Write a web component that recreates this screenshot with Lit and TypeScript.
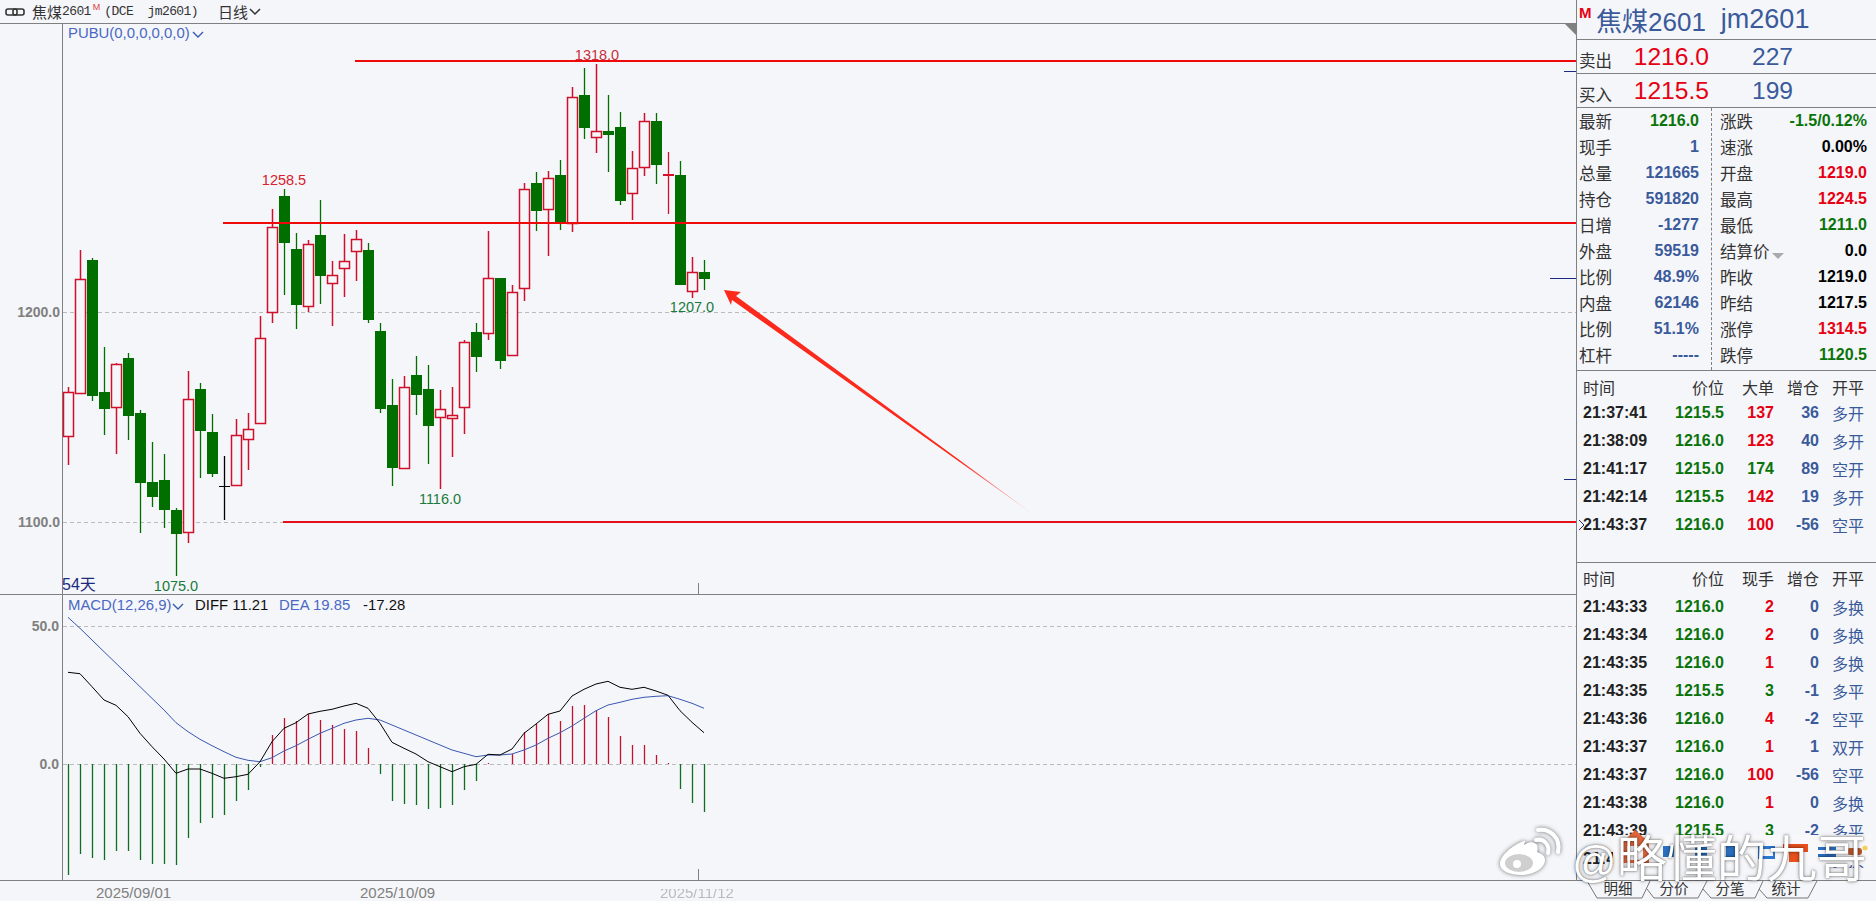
import { LitElement, css, html, svg } from 'lit';
import { customElement } from 'lit/decorators.js';

// [kind, high, bodyTop, bodyBottom, low] in page pixels. u = hollow red, d = solid green, x = black doji, r = red doji
type Candle = [string, number, number, number, number];
const CANDLES: Candle[] = [
  ['u', 387, 392, 436, 465], ['u', 250, 279, 393, 393], ['d', 258, 260, 396, 401], ['d', 347, 392, 409, 435],
  ['u', 363, 364, 407, 454], ['d', 353, 358, 416, 440], ['d', 410, 413, 483, 533], ['d', 442, 482, 497, 507],
  ['d', 454, 480, 510, 528], ['d', 508, 510, 534, 576], ['u', 371, 399, 532, 543], ['d', 383, 389, 431, 478],
  ['d', 414, 432, 474, 477], ['x', 456, 486, 486, 520], ['u', 419, 435, 485, 485], ['u', 413, 429, 439, 470],
  ['u', 316, 338, 423, 424], ['u', 209, 227, 312, 323], ['d', 189, 196, 243, 295], ['d', 233, 249, 305, 329],
  ['u', 240, 244, 306, 312], ['d', 200, 235, 276, 304], ['u', 261, 275, 283, 326], ['u', 234, 261, 268, 297],
  ['u', 230, 239, 251, 281], ['d', 243, 250, 320, 323], ['d', 323, 331, 409, 413], ['d', 379, 405, 468, 486],
  ['u', 376, 387, 468, 468], ['d', 356, 375, 395, 415], ['d', 365, 389, 426, 464], ['u', 390, 409, 417, 489],
  ['u', 387, 415, 418, 457], ['u', 340, 342, 407, 434], ['d', 323, 332, 357, 372], ['u', 231, 278, 333, 340],
  ['d', 278, 278, 361, 369], ['u', 285, 292, 355, 355], ['u', 183, 189, 288, 301], ['d', 172, 183, 211, 231],
  ['u', 171, 178, 209, 256], ['d', 160, 175, 222, 230], ['u', 87, 97, 223, 232], ['d', 68, 95, 128, 139],
  ['u', 64, 131, 137, 153], ['d', 95, 131, 135, 172], ['d', 112, 127, 201, 205], ['u', 151, 168, 193, 220],
  ['u', 113, 121, 167, 176], ['d', 113, 121, 165, 184], ['r', 152, 174, 176, 214], ['d', 161, 175, 285, 285],
  ['u', 257, 272, 291, 298], ['d', 260, 272, 279, 290],
];

const HIST = [
  875, 854, 858, 860, 851, 851, 860, 864, 864, 865, 838, 823, 818, 815, 801, 790, 767, 735, 718, 721, 714, 720, 725,
  729, 731, 748, 774, 801, 804, 805, 809, 808, 805, 790, 781, 763, 764, 754, 732, 724, 714, 721, 706, 705, 710, 717,
  736, 745, 745, 755, 763, 789, 803, 812,
];

const DIFF = [
  307, 311, 350, 390, 406, 440, 490, 530, 567, 610, 597, 597, 610, 625, 620, 613, 575, 515, 475, 458, 432, 424, 418,
  408, 400, 415, 460, 517, 535, 552, 575, 590, 605, 590, 583, 553, 555, 537, 490, 462, 433, 423, 378, 358, 342, 334,
  352, 358, 352, 363, 376, 422, 457, 488,
];

const DEA = [
  142, 175, 210, 245, 280, 315, 350, 385, 420, 458, 485, 508, 527, 545, 562, 571, 575, 563, 543, 527, 508, 490, 475,
  460, 450, 445, 450, 465, 480, 495, 510, 525, 540, 550, 560, 555, 555, 552, 540, 525, 505, 488, 468, 445, 422, 405,
  397, 388, 382, 379, 377, 388, 400, 415,
];

const cx = (i: number) => 68 + 12 * i;
const line = (data: number[]) => data.map((v, i) => `${cx(i)},${(570 + v / 3).toFixed(1)}`).join(' ');

type Tone = 'g' | 'r' | 'b' | 'k';
const STATS_LEFT: [string, string, Tone][] = [
  ['最新', '1216.0', 'g'], ['现手', '1', 'b'], ['总量', '121665', 'b'], ['持仓', '591820', 'b'], ['日增', '-1277', 'b'],
  ['外盘', '59519', 'b'], ['比例', '48.9%', 'b'], ['内盘', '62146', 'b'], ['比例', '51.1%', 'b'], ['杠杆', '-----', 'b'],
];
const STATS_RIGHT: [string, string, Tone][] = [
  ['涨跌', '-1.5/0.12%', 'g'], ['速涨', '0.00%', 'k'], ['开盘', '1219.0', 'r'], ['最高', '1224.5', 'r'], ['最低', '1211.0', 'g'],
  ['结算价', '0.0', 'k'], ['昨收', '1219.0', 'k'], ['昨结', '1217.5', 'k'], ['涨停', '1314.5', 'r'], ['跌停', '1120.5', 'g'],
];

type Tick = [string, string, string, Tone, string, string];
const BIG: Tick[] = [
  ['21:37:41', '1215.5', '137', 'r', '36', '多开'],
  ['21:38:09', '1216.0', '123', 'r', '40', '多开'],
  ['21:41:17', '1215.0', '174', 'g', '89', '空开'],
  ['21:42:14', '1215.5', '142', 'r', '19', '多开'],
  ['21:43:37', '1216.0', '100', 'r', '-56', '空平'],
];
const TICKS: Tick[] = [
  ['21:43:33', '1216.0', '2', 'r', '0', '多换'],
  ['21:43:34', '1216.0', '2', 'r', '0', '多换'],
  ['21:43:35', '1216.0', '1', 'r', '0', '多换'],
  ['21:43:35', '1215.5', '3', 'g', '-1', '多平'],
  ['21:43:36', '1216.0', '4', 'r', '-2', '空平'],
  ['21:43:37', '1216.0', '1', 'r', '1', '双开'],
  ['21:43:37', '1216.0', '100', 'r', '-56', '空平'],
  ['21:43:38', '1216.0', '1', 'r', '0', '多换'],
  ['21:43:39', '1215.5', '3', 'g', '-2', '多平'],
  ['21:43:40', '1216.0', '1', 'r', '0', '多换'],
];

@customElement('app-root')
export class AppRoot extends LitElement {
  static override styles = css`
    :host {
      display: block;
      position: relative;
      width: 1876px;
      height: 901px;
      overflow: hidden;
      background: #f5f6fa;
      font-family: 'Liberation Sans', 'Noto Sans CJK SC', sans-serif;
      color: #222;
    }
    .upper {
      display: flex;
      height: 881px;
      border-bottom: 1px solid #808080;
      box-sizing: border-box;
    }
    .chart {
      width: 1576px;
      display: flex;
      flex-direction: column;
    }
    .head {
      height: 24px;
      box-sizing: border-box;
      border-bottom: 1px solid #808080;
      display: flex;
      align-items: center;
      padding-left: 5px;
      font-size: 15px;
      color: #333;
    }
    .head .mono {
      font-family: 'Liberation Mono', 'Noto Sans CJK SC', monospace;
      font-size: 13px;
      letter-spacing: -0.6px;
      white-space: pre;
    }
    .head sup {
      color: #e04040;
      font-size: 9px;
      margin: 0 4px 0 2px;
      align-self: flex-start;
      line-height: 14px;
    }
    .link {
      margin-right: 7px;
    }
    .period {
      margin-left: 20px;
    }
    .pane {
      display: block;
    }
    .main-pane {
      border-bottom: 1px solid #808080;
    }
    .axis {
      font: bold 14px 'Liberation Sans', sans-serif;
      fill: #808080;
    }
    .note {
      font: 14.5px 'Liberation Sans', sans-serif;
    }
    .indic {
      font: 14.9px 'Liberation Sans', sans-serif;
      fill: #4a68c4;
    }
    .indic.k {
      fill: #111;
    }
    .days {
      font: 16px 'Liberation Sans', 'Noto Sans CJK SC', sans-serif;
      fill: #1c2a80;
    }
    .date {
      font: 15px 'Liberation Sans', sans-serif;
      fill: #808080;
    }
    .side {
      width: 300px;
      box-sizing: border-box;
      border-left: 1px solid #808080;
      display: flex;
      flex-direction: column;
      font-size: 16px;
    }
    .title {
      height: 40px;
      box-sizing: border-box;
      border-bottom: 1px solid #808080;
      display: flex;
      align-items: center;
      padding-left: 2px;
      font-size: 26px;
      color: #3a5a9a;
    }
    .title b {
      font-size: 15px;
      color: #e60012;
      align-self: flex-start;
      width: 17px;
      line-height: 26px;
    }
    .title .code {
      margin-left: 15px;
      font-size: 27px;
    }
    .quote {
      height: 34px;
      box-sizing: border-box;
      border-bottom: 1px solid #808080;
      display: grid;
      grid-template-columns: 40px 90px 84px;
      align-items: center;
      padding-left: 2px;
      font-size: 24.6px;
      text-align: right;
    }
    .quote span:first-child {
      font-size: 16.5px;
      text-align: left;
      color: #333;
      padding-top: 7px;
    }
    .quote .price {
      color: #e60012;
    }
    .quote .qty {
      color: #3a5a9a;
    }
    .stats {
      height: 263px;
      box-sizing: border-box;
      border-bottom: 1px solid #808080;
      display: flex;
    }
    .col {
      box-sizing: border-box;
    }
    .col.l {
      width: 135px;
      padding: 0 12px 0 2px;
      border-right: 1px dashed #808080;
    }
    .col.r {
      flex: 1;
      padding: 0 9px 0 8px;
    }
    .row {
      display: flex;
      justify-content: space-between;
      align-items: center;
      height: 26px;
    }
    .row span:first-child {
      color: #333;
      font-size: 16.5px;
    }
    .row b,
    .ticks b {
      font-size: 16px;
    }
    .g {
      color: #0a740a;
    }
    .r-t {
      color: #e60012;
    }
    .b {
      color: #3a5a9a;
    }
    .k {
      color: #000;
    }
    .caret {
      display: inline-block;
      margin-left: 2px;
      border: 6px solid transparent;
      border-top: 6px solid #aaa;
      border-bottom: 0;
      vertical-align: -1px;
    }
    .ticks {
      position: relative;
      box-sizing: border-box;
      padding: 4px 0 0 6px;
    }
    .ticks.first {
      height: 192px;
      border-bottom: 1px solid #808080;
    }
    .ticks.second {
      flex: 1;
      padding-top: 3px;
      overflow: hidden;
    }
    .grid {
      display: grid;
      grid-template-columns: 82px 59px 50px 45px 45px;
      height: 28px;
      align-items: center;
      text-align: right;
    }
    .grid > :first-child {
      text-align: left;
    }
    .grid.hd {
      height: 20px;
      margin-bottom: 4px;
      color: #333;
    }
    .second .grid.hd {
      margin-bottom: 7px;
    }
    .grid .t {
      color: #222;
    }
    .grid .o {
      color: #3a5a9a;
    }
    .pointer {
      position: absolute;
      left: 1px;
      top: 148px;
    }
    .foot {
      display: flex;
      height: 20px;
    }
    .foot svg {
      display: block;
    }
    .tabs {
      position: relative;
      display: flex;
      padding-left: 14px;
      font-size: 14.5px;
      color: #333;
    }
    .tabs svg {
      position: absolute;
      left: 0;
      top: 0;
    }
    .tabs span {
      position: relative;
      width: 56px;
      text-align: center;
      line-height: 17px;
    }
    .strip {
      position: absolute;
      left: 1613px;
      top: 830px;
    }
    .logo {
      position: absolute;
      left: 1498px;
      top: 825px;
      filter: drop-shadow(0 0 2px rgba(0, 0, 0, 0.55));
    }
    .mark {
      position: absolute;
      left: 1572px;
      top: 820px;
      font: 50px/70px 'Noto Sans CJK SC', sans-serif;
      color: #fff;
      text-shadow: 0 0 2px rgba(0, 0, 0, 0.6), 0 0 4px rgba(0, 0, 0, 0.3);
      white-space: nowrap;
    }
    .mark i {
      font: 44px 'Liberation Sans', sans-serif;
    }
  `;

  private candles() {
    return CANDLES.map(([k, hi, top, bot, lo], i) => {
      const x = cx(i) + 0.5;
      if (k === 'd') {
        return svg`<line x1=${x} x2=${x} y1=${hi} y2=${lo} stroke="#006f00" stroke-width="1.3" />
          <rect x=${x - 5.5} y=${top} width="11" height=${bot - top} fill="#006f00" />`;
      }
      if (k === 'x' || k === 'r') {
        const c = k === 'x' ? '#000' : '#d80f28';
        return svg`<line x1=${x} x2=${x} y1=${hi} y2=${lo} stroke=${c} stroke-width="1.3" />
          <rect x=${x - 5.5} y=${top} width="11" height=${k === 'x' ? 1 : 2} fill=${c} />`;
      }
      return svg`<line x1=${x} x2=${x} y1=${hi} y2=${lo} stroke="#d0102a" stroke-width="1.5" />
        <rect x=${x - 5} y=${top + 0.5} width="10" height=${bot - top} fill="#f5f6fa" stroke="#d0102a" stroke-width="1.5" />`;
    });
  }

  private mainPane() {
    return html`<svg class="pane main-pane" width="1576" height="570" viewBox="0 24 1576 570">
      <g shape-rendering="crispEdges">
        <line x1="62.5" x2="62.5" y1="24" y2="594" stroke="#808080" />
        <line x1="63" x2="1576" y1="312.5" y2="312.5" stroke="#bbb" stroke-dasharray="4 3" />
        <line x1="63" x2="1576" y1="522.5" y2="522.5" stroke="#bbb" stroke-dasharray="4 3" />
      </g>
      ${this.candles()}
      <g shape-rendering="crispEdges">
        <rect x="355" y="60" width="1221" height="2" fill="#ee0a0a" />
        <rect x="223" y="222" width="1353" height="2" fill="#ee0a0a" />
        <rect x="283" y="521" width="1293" height="2" fill="#e3101a" />
        <line x1="1564" x2="1576" y1="71.5" y2="71.5" stroke="#1c2a80" />
        <line x1="1550" x2="1576" y1="278.5" y2="278.5" stroke="#1c2a80" />
        <line x1="1564" x2="1576" y1="479.5" y2="479.5" stroke="#1c2a80" />
        <line x1="698.5" x2="698.5" y1="583" y2="594" stroke="#808080" />
      </g>
      <polygon points="1565,24 1576,24 1576,35" fill="#808080" />
      <text class="indic" x="68" y="38">PUBU(0,0,0,0,0,0)</text>
      <polyline points="193,32 198,37 203,32" fill="none" stroke="#3a5ab0" stroke-width="1.4" />
      <text class="axis" x="60" y="317" text-anchor="end">1200.0</text>
      <text class="axis" x="60" y="527" text-anchor="end">1100.0</text>
      <text class="note" x="284" y="185" text-anchor="middle" fill="#d9202c">1258.5</text>
      <text class="note" x="597" y="60" text-anchor="middle" fill="#c8303a">1318.0</text>
      <text class="note" x="692" y="312" text-anchor="middle" fill="#1a7a3a">1207.0</text>
      <text class="note" x="440" y="504" text-anchor="middle" fill="#1a7a3a">1116.0</text>
      <text class="note" x="176" y="591" text-anchor="middle" fill="#1a7a3a">1075.0</text>
      <text class="days" x="62" y="590">54天</text>
      <defs>
        <linearGradient id="fade" gradientUnits="userSpaceOnUse" x1="724" y1="290" x2="1037" y2="517">
          <stop offset="0.75" stop-color="#fb2a1c" />
          <stop offset="1" stop-color="#fb2a1c" stop-opacity="0.1" />
        </linearGradient>
      </defs>
      <polygon
        points="724,290 741,292 736,296 1037,517 732,300 731,305"
        fill="url(#fade)"
      />
    </svg>`;
  }

  private macdPane() {
    return html`<svg class="pane" width="1576" height="285" viewBox="0 595 1576 285">
      <g shape-rendering="crispEdges">
        <line x1="62.5" x2="62.5" y1="595" y2="880" stroke="#808080" />
        <line x1="63" x2="1576" y1="626.5" y2="626.5" stroke="#bbb" stroke-dasharray="4 3" />
        <line x1="63" x2="1576" y1="764.5" y2="764.5" stroke="#bbb" stroke-dasharray="4 3" />
        <line x1="698.5" x2="698.5" y1="869" y2="880" stroke="#808080" />
      </g>
      ${HIST.map((v, i) =>
        svg`<line x1=${cx(i) + 0.5} x2=${cx(i) + 0.5} y1="764" y2=${v}
          stroke=${v > 764 ? '#0f6f1f' : '#c8102e'} stroke-width="1.3" />`,
      )}
      <polyline points=${line(DEA)} fill="none" stroke="#3a57b0" />
      <polyline points=${line(DIFF)} fill="none" stroke="#000" />
      <text class="indic" x="68" y="610">MACD(12,26,9)</text>
      <polyline points="173,604 178,609 183,604" fill="none" stroke="#3a5ab0" stroke-width="1.4" />
      <text class="indic k" x="195" y="610">DIFF 11.21</text>
      <text class="indic" x="279" y="610">DEA 19.85</text>
      <text class="indic k" x="363" y="610">-17.28</text>
      <text class="axis" x="59" y="631" text-anchor="end">50.0</text>
      <text class="axis" x="59" y="769" text-anchor="end">0.0</text>
    </svg>`;
  }

  private tickRow(t: Tick) {
    return html`<div class="grid">
      <b class="t">${t[0]}</b><b class="g">${t[1]}</b><b class=${t[3] === 'r' ? 'r-t' : 'g'}>${t[2]}</b><b class="b">${t[4]}</b
      ><span class="o">${t[5]}</span>
    </div>`;
  }

  override render() {
    const tone = (t: Tone) => (t === 'r' ? 'r-t' : t);
    return html`
      <div class="upper">
        <div class="chart">
          <div class="head">
            <svg class="link" width="20" height="8" viewBox="0 0 20 8" fill="none" stroke="#333" stroke-width="1.6">
              <rect x="1" y="1" width="11" height="6" rx="2" /><rect x="8" y="1" width="11" height="6" rx="2" />
            </svg>
            <span>焦煤</span><span class="mono">2601</span><sup>M</sup><span class="mono">(DCE  jm2601)</span>
            <span class="period">日线</span>
            <svg width="14" height="10" viewBox="0 0 14 10" fill="none" stroke="#333" stroke-width="1.5">
              <polyline points="2,2 7,7 12,2" />
            </svg>
          </div>
          ${this.mainPane()} ${this.macdPane()}
        </div>
        <div class="side">
          <div class="title"><b>M</b><span>焦煤2601</span><span class="code">jm2601</span></div>
          <div class="quote"><span>卖出</span><span class="price">1216.0</span><span class="qty">227</span></div>
          <div class="quote"><span>买入</span><span class="price">1215.5</span><span class="qty">199</span></div>
          <div class="stats">
            <div class="col l">
              ${STATS_LEFT.map(([k, v, t]) => html`<div class="row"><span>${k}</span><b class=${tone(t)}>${v}</b></div>`)}
            </div>
            <div class="col r">
              ${STATS_RIGHT.map(
                ([k, v, t]) =>
                  html`<div class="row">
                    <span>${k}${k === '结算价' ? html`<i class="caret"></i>` : ''}</span><b class=${tone(t)}>${v}</b>
                  </div>`,
              )}
            </div>
          </div>
          <div class="ticks first">
            <div class="grid hd"><span>时间</span><span>价位</span><span>大单</span><span>增仓</span><span>开平</span></div>
            ${BIG.map((t) => this.tickRow(t))}
            <svg class="pointer" width="7" height="12" viewBox="0 0 7 12" fill="none" stroke="#1c2a80">
              <polyline points="1,1 6,6 1,11" />
            </svg>
          </div>
          <div class="ticks second">
            <div class="grid hd"><span>时间</span><span>价位</span><span>现手</span><span>增仓</span><span>开平</span></div>
            ${TICKS.map((t) => this.tickRow(t))}
          </div>
        </div>
      </div>
      <div class="foot">
        <svg width="1576" height="20" viewBox="0 881 1576 20">
          <defs>
            <clipPath id="smear"><rect x="650" y="889" width="100" height="12" /></clipPath>
            <filter id="soft"><feGaussianBlur stdDeviation="0.7" /></filter>
          </defs>
          <text class="date" x="96" y="898">2025/09/01</text>
          <text class="date" x="360" y="898">2025/10/09</text>
          <g clip-path="url(#smear)">
            <text class="date" x="660" y="898" filter="url(#soft)" opacity="0.5">2025/11/12</text>
          </g>
        </svg>
        <div class="tabs">
          <svg width="300" height="20" viewBox="0 0 300 20" fill="none" stroke="#777">
            <path d="M11 0L21 17H66L74 0M71 8L78 17H122L131 0M127 8L135 17H179L187 0M183 8L191 17H232L241 0" />
          </svg>
          <span>明细</span><span>分价</span><span>分笔</span><span>统计</span>
        </div>
      </div>
      <svg class="strip" width="258" height="36" viewBox="0 0 258 36">
        <rect y="5" width="258" height="30" fill="#f8f8fb" />
        <path d="M8 33V14L22 0L36 12V33Z" fill="#e2653c" />
        <rect x="14" y="16" width="16" height="14" fill="#f8f8fb" />
        <rect x="50" y="16" width="11" height="11" fill="#2a6fc0" />
        <rect x="82" y="17" width="12" height="10" fill="#2a6fc0" />
        <rect x="113" y="16" width="9" height="12" fill="#2a6fc0" />
        <rect x="145" y="16" width="17" height="13" fill="#2a78d0" />
        <rect x="147" y="19" width="13" height="7" fill="#f8f8fb" />
        <path d="M170 14H195V22H190V32H176V22H170Z" fill="#e8501c" />
        <rect x="205" y="17" width="18" height="3" fill="#2a6fc0" />
        <rect x="205" y="24" width="18" height="3" fill="#2a6fc0" />
        <rect x="234" y="18" width="15" height="7" rx="3" fill="#b8562a" />
        <circle cx="252" cy="18" r="2.5" fill="#f2d25a" />
      </svg>
      <svg class="logo" width="66" height="56" viewBox="0 0 66 56">
        <path
          d="M26 16C15 20 2 30 2 39C2 46 12 50 23 50C36 50 47 43 47 35C47 30 42 28 39 27C40 24 40 20 38 19C35 16 30 17 26 20C27 17 28 15 26 16Z"
          fill="#fff"
        />
        <ellipse cx="21" cy="38" rx="14" ry="9" fill="#cfcfcf" />
        <circle cx="19" cy="39" r="4" fill="#fff" />
        <path d="M50 28C52 20 46 13 38 15" fill="none" stroke="#fff" stroke-width="4" stroke-linecap="round" />
        <path d="M60 27C63 13 52 3 40 5" fill="none" stroke="#fff" stroke-width="4" stroke-linecap="round" />
      </svg>
      <div class="mark"><i>@</i>略懂的九哥</div>
    `;
  }
}

declare global {
  interface HTMLElementTagNameMap {
    'app-root': AppRoot;
  }
}
